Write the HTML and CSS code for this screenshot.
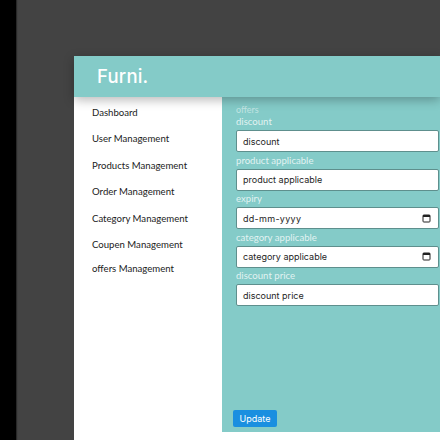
FILE: index.html
```html
<!DOCTYPE html>
<html lang="en">
<head>
<meta charset="utf-8">
<title>Furni. offers</title>
<link rel="stylesheet" href="styles.css">
</head>
<body>
<div class="strip"></div>
<div class="stage">
  <div class="panel">
    <header class="topbar"><span class="brand">Furni.</span></header>
    <div class="body">
      <nav class="sidebar">
        <a class="nav-item">Dashboard</a>
        <a class="nav-item">User Management</a>
        <a class="nav-item">Products Management</a>
        <a class="nav-item">Order Management</a>
        <a class="nav-item">Category Management</a>
        <a class="nav-item">Coupen Management</a>
        <a class="nav-item last">offers Management</a>
      </nav>
      <main class="content">
        <div class="title">offers</div>
        <div class="group">
          <label class="label">discount</label>
          <div class="field"><span class="value">discount</span></div>
        </div>
        <div class="group">
          <label class="label">product applicable</label>
          <div class="field"><span class="value">product applicable</span></div>
        </div>
        <div class="group">
          <label class="label">expiry</label>
          <div class="field date"><span class="value mono">dd-mm-yyyy</span>
            <svg class="cal" width="9" height="9" viewBox="0 0 9 9"><rect x="1" y="1" width="7" height="7" rx="0.8" fill="none" stroke="#222" stroke-width="1"/><rect x="1" y="1" width="7" height="2" fill="#222"/></svg>
          </div>
        </div>
        <div class="group">
          <label class="label">category applicable</label>
          <div class="field date"><span class="value">category applicable</span>
            <svg class="cal" width="9" height="9" viewBox="0 0 9 9"><rect x="1" y="1" width="7" height="7" rx="0.8" fill="none" stroke="#222" stroke-width="1"/><rect x="1" y="1" width="7" height="2" fill="#222"/></svg>
          </div>
        </div>
        <div class="group">
          <label class="label">discount price</label>
          <div class="field"><span class="value">discount price</span></div>
        </div>
        <button class="btn">Update</button>
      </main>
    </div>
  </div>
</div>
</body>
</html>
```

FILE: styles.css
```css
html, body {
  margin: 0;
  padding: 0;
  height: 440px;
}
body {
  display: flex;
  background: #434343;
  font-family: "Inter", "Noto Sans", sans-serif;
  overflow: hidden;
}
.strip {
  width: 16px;
  background: #000;
  box-shadow: 1px 0 1px rgba(0,0,0,0.4);
}
.stage {
  flex: 1;
  padding: 56px 0 0 58px;
  display: flex;
}
.panel {
  flex: 1;
  background: #fff;
  display: flex;
  flex-direction: column;
}
.topbar {
  height: 41px;
  background: #84cbc8;
  display: flex;
  align-items: center;
  padding-left: 23px;
  position: relative;
  z-index: 2;
  box-shadow: 0 3px 10px rgba(0,0,0,0.28);
}
.brand {
  color: #fff;
  font-size: 18.5px;
  font-weight: 500;
  letter-spacing: 0.2px;
  margin-top: -2px;
}
.body {
  flex: 1;
  display: flex;
}
.sidebar {
  width: 130px;
  padding: 10px 0 0 18px;
  display: flex;
  flex-direction: column;
}
.nav-item {
  font-family: "Lato", "Inter", sans-serif;
  font-size: 9.6px;
  line-height: 12px;
  color: #222;
  margin-bottom: 14.4px;
}
.nav-item.last {
  margin-top: -2.5px;
}
.content {
  flex: 1;
  background: #84cbc8;
  margin-bottom: 8px;
  padding: 7px 0 5px 14px;
  display: flex;
  flex-direction: column;
}
.title {
  font-family: "Lato", "Inter", sans-serif;
  font-size: 9px;
  line-height: 12px;
  color: rgba(255,255,255,0.5);
}
.group {
  display: flex;
  flex-direction: column;
  margin-bottom: 2.5px;
}
.label {
  font-family: "Lato", "Inter", sans-serif;
  font-size: 9.6px;
  line-height: 12px;
  color: rgba(255,255,255,0.78);
  margin-bottom: 2px;
}
.field {
  width: 203px;
  height: 22px;
  box-sizing: border-box;
  background: #fff;
  border: 1px solid #5e8f8d;
  border-radius: 2px;
  display: flex;
  align-items: center;
  padding: 0 7px 0 6px;
}
.value {
  flex: 1;
  font-size: 9px;
  color: #1e1e1e;
}
.mono {
  letter-spacing: 0.3px;
}
.cal {
  display: block;
}
.btn {
  margin-top: auto;
  margin-left: -3px;
  align-self: flex-start;
  background: #1a8fe0;
  color: #fff;
  border: none;
  border-radius: 2px;
  font-family: "Inter", "Noto Sans", sans-serif;
  font-size: 9px;
  height: 17px;
  width: 44px;
  padding: 0;
}
```
